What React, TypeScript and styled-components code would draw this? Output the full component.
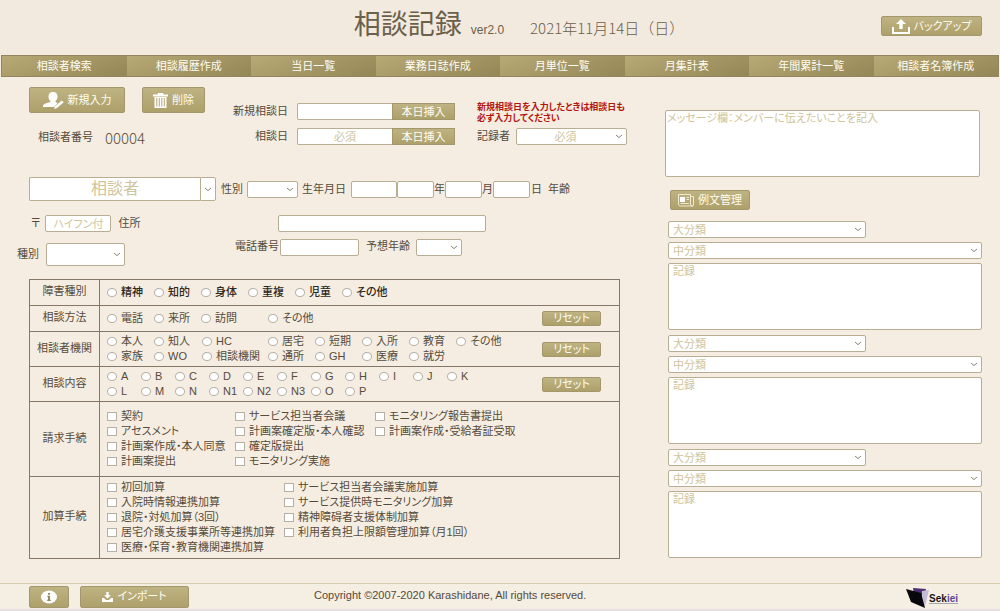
import React, { useId } from "react";
import styled, { createGlobalStyle, css } from "styled-components";

const line = "#b9ae94";
const rule = "#857868";
const ink = "#554b3c";
const hint = "#cfc49c";

const Global = createGlobalStyle`
  * { box-sizing: border-box; }
  html { background: #e4e2e2; }
  body {
    margin: 0;
    color: ${ink};
    font: 11px/15px "Liberation Sans", "Noto Sans CJK JP", sans-serif;
    font-feature-settings: "palt";
  }
  button, input, select, textarea { font: inherit; font-feature-settings: inherit; color: inherit; margin: 0; }
  button { cursor: pointer; }
  h1, p { margin: 0; }
`;

const Page = styled.div`
  background: #f5ede1;
  margin-bottom: 3px;
`;

const Header = styled.header`
  display: grid;
  grid-template-columns: 1fr auto 1fr;
  align-items: center;
  height: 55px;
  padding: 0 18px 3px 56px;
  background: #f2eadf;
`;

const Heading = styled.div`
  grid-column: 2;
  display: flex;
  align-items: baseline;
  padding-bottom: 2px;
  color: #6b6049;
`;

const Title = styled.h1`
  font-size: 27px;
  line-height: 40px;
  font-weight: 400;
`;

const Version = styled.span`
  margin: 0 26px 0 9px;
  font-size: 12px;
`;

const Today = styled.time`
  font-family: "Noto Sans CJK JP", sans-serif;
  font-size: 15px;
  font-weight: 300;
  font-feature-settings: normal;
`;

const gold = css`
  border: 1px solid #a3986c;
  background: linear-gradient(#bfb383, #ada06a);
  color: #fffdf2;
`;

const GoldButton = styled.button<{ $w: number; $h: number }>`
  ${gold}
  display: inline-flex;
  align-items: center;
  justify-content: center;
  gap: 4px;
  width: ${(p) => p.$w}px;
  height: ${(p) => p.$h}px;
  padding: 0;
  border-radius: 2px;
  white-space: nowrap;
`;

const BackupButton = styled(GoldButton)`
  justify-self: end;
`;

const Nav = styled.nav`
  display: grid;
  grid-template-columns: repeat(8, 1fr);
  margin: 0 1px;
  border: 1px solid #92865a;
`;

const NavLink = styled.a`
  background: linear-gradient(160deg, #b7aa76, #948656);
  color: #fffdf2;
  line-height: 20px;
  text-align: center;
  text-decoration: none;
`;

const Main = styled.main`
  display: grid;
  grid-template-columns: minmax(0, 620fr) minmax(0, 317fr);
  column-gap: 45px;
  padding: 10px 18px 24px 0;
`;

const Left = styled.div`
  min-width: 0;
`;

const Intro = styled.div`
  display: flex;
  align-items: flex-start;
  height: 90px;
  padding-left: 29px;
  > * { flex: none; }
`;

const Actions = styled.div`
  width: 199px;
`;

const ButtonRow = styled.div`
  display: flex;
  gap: 17px;
`;

const CaseNumber = styled.div`
  display: flex;
  align-items: center;
  gap: 12px;
  margin-top: 17px;
  padding-left: 9px;
`;

const CaseValue = styled.output`
  font-family: "Noto Sans CJK JP", sans-serif;
  font-size: 15px;
  font-weight: 300;
`;

const Dates = styled.div`
  display: grid;
  grid-template-columns: 60px 158px;
  column-gap: 9px;
  row-gap: 8px;
  margin-top: 16px;
`;

const DateLabel = styled.label`
  line-height: 17px;
  text-align: right;
`;

const DateField = styled.div`
  display: flex;
`;

const boxed = css`
  border: 1px solid ${line};
  border-radius: 2px;
  background: #fff;
  outline: none;
  &::placeholder { color: ${hint}; opacity: 1; }
`;

const TextBox = styled.input<{ $w: number; $center?: boolean }>`
  ${boxed}
  width: ${(p) => p.$w}px;
  height: 17px;
  padding: 0 3px;
  text-align: ${(p) => (p.$center ? "center" : "left")};
`;

const DateBox = styled(TextBox)`
  border-right: 0;
  border-radius: 2px 0 0 2px;
`;

const InsertButton = styled.button`
  ${gold}
  width: 63px;
  height: 17px;
  padding: 0;
  line-height: 14px;
`;

const Recorder = styled.div`
  margin: 15px 0 0 22px;
`;

const Notice = styled.p`
  height: 26px;
  color: #b3150f;
  font-size: 9px;
  font-weight: 700;
  line-height: 11px;
  white-space: nowrap;
`;

const Line = styled.div`
  display: flex;
  align-items: center;
`;

const FieldLabel = styled.label<{ $l?: number; $r?: number }>`
  margin: 0 ${(p) => p.$r ?? 0}px 0 ${(p) => p.$l ?? 0}px;
  white-space: nowrap;
`;

const PickBox = styled.div<{ $w?: number; $h: number }>`
  display: grid;
  width: ${(p) => (p.$w ? p.$w + "px" : "100%")};
  height: ${(p) => p.$h}px;
  > * { grid-area: 1 / 1; }
  > svg { place-self: center end; margin-right: 4px; pointer-events: none; }
`;

const NativeSelect = styled.select<{ $center?: boolean }>`
  ${boxed}
  appearance: none;
  width: 100%;
  height: 100%;
  padding: 0 16px 0 4px;
  color: ${hint};
  line-height: 14px;
  text-align-last: ${(p) => (p.$center ? "center" : "left")};
`;

const Chevron = () => (
  <svg width="8" height="5" viewBox="0 0 8 5" fill="none" stroke="#8d8470" aria-hidden="true">
    <path d="M1 1l3 2.6L7 1" />
  </svg>
);

type PickProps = { id?: string; label?: string; text?: string; w?: number; h?: number; center?: boolean };

const Pick = ({ id, label, text = "", w, h = 17, center }: PickProps) => (
  <PickBox $w={w} $h={h}>
    <NativeSelect id={id} aria-label={label} $center={center}>
      <option>{text}</option>
    </NativeSelect>
    <Chevron />
  </PickBox>
);

const PersonRow = styled(Line)`
  padding-left: 29px;
`;

const ClientBox = styled.input`
  ${boxed}
  width: 171px;
  height: 24px;
  border-right: 0;
  border-radius: 2px 0 0 2px;
  font-size: 16px;
  text-align: center;
`;

const ClientToggle = styled.button`
  ${boxed}
  display: grid;
  place-items: center;
  width: 16px;
  height: 24px;
  padding: 0;
  border-radius: 0 2px 2px 0;
`;

const AddressRow = styled(Line)`
  margin-top: 14px;
  padding-left: 31px;
`;

const AddressBox = styled(TextBox)`
  margin-left: 138px;
`;

const PhoneRow = styled(Line)`
  align-items: flex-start;
  height: 40px;
  margin-top: 7px;
  padding-left: 17px;
`;

const Kind = styled.div`
  display: flex;
  align-items: center;
  gap: 7px;
  width: 218px;
  margin-top: 4px;
`;

const Sheet = styled.form`
  margin: 0 0 0 29px;
  border: 1px solid ${rule};
`;

const SheetRow = styled.div<{ $h: number }>`
  display: grid;
  grid-template-columns: 70px minmax(0, 1fr) auto;
  align-items: center;
  min-height: ${(p) => p.$h}px;
  border-bottom: 1px solid ${rule};
  &:last-child { border-bottom: 0; }
`;

const SheetLabel = styled.div`
  display: grid;
  place-items: center;
  align-self: stretch;
  padding-bottom: 2px;
  border-right: 1px solid ${rule};
`;

const Choices = styled.div<{ $cols: string; $strong?: boolean }>`
  display: grid;
  grid-template-columns: ${(p) => p.$cols};
  grid-auto-rows: 15px;
  padding-left: 7px;
  color: ${(p) => (p.$strong ? "#2f281c" : ink)};
  font-weight: ${(p) => (p.$strong ? 500 : 400)};
`;

const Choice = styled.label`
  display: flex;
  align-items: center;
  gap: 4px;
  white-space: nowrap;
`;

const Radio = styled.input`
  appearance: none;
  flex: none;
  width: 10px;
  height: 9px;
  border: 1px solid #b5b0a6;
  border-radius: 50%;
  background: #fff;
  &:checked { background: ${ink}; }
`;

const Check = styled(Radio)`
  border-radius: 0;
`;

const Reset = styled(GoldButton)`
  margin-right: 18px;
`;

type GroupProps = {
  title: string;
  cols: string;
  items: string[];
  h: number;
  strong?: boolean;
  multi?: boolean;
  reset?: boolean;
};

const Group = ({ title, cols, items, h, strong, multi, reset }: GroupProps) => {
  const id = useId();
  return (
    <SheetRow $h={h} role="group" aria-labelledby={id}>
      <SheetLabel id={id}>{title}</SheetLabel>
      <Choices $cols={cols} $strong={strong}>
        {items.map((t, i) =>
          t ? (
            <Choice key={i}>
              {multi ? <Check type="checkbox" /> : <Radio type="radio" name={id} />}
              {t}
            </Choice>
          ) : (
            <span key={i} />
          )
        )}
      </Choices>
      {reset && <Reset type="reset" $w={59} $h={15}>リセット</Reset>}
    </SheetRow>
  );
};

const Right = styled.div`
  display: flex;
  flex-direction: column;
  align-items: flex-start;
  padding-top: 23px;
`;

const Area = styled.textarea`
  ${boxed}
  display: block;
  width: 100%;
  height: 67px;
  padding: 0 4px;
  resize: none;
`;

const MessageArea = styled(Area)`
  width: calc(100% - 2px);
  padding: 0 1px;
`;

const ExampleButton = styled(GoldButton)`
  margin: 13px 0 11px 5px;
`;

const Records = styled.div`
  display: grid;
  row-gap: 5px;
  width: 100%;
  padding-left: 3px;
`;

const Record = styled.section`
  display: grid;
  row-gap: 4px;
`;

const Major = styled.div`
  width: 63%;
`;

const Footer = styled.footer`
  display: grid;
  grid-template-columns: 285px auto 1fr;
  align-items: center;
  height: 26px;
  padding: 0 42px 0 29px;
  border-top: 1px solid #d6cbb0;
  background: #f5eee2;
`;

const FooterButtons = styled.div`
  display: flex;
  gap: 11px;
`;

const Copyright = styled.small`
  padding-bottom: 3px;
  font-size: 11px;
`;

const Brand = styled.a`
  display: flex;
  align-items: center;
  justify-self: end;
  padding-top: 3px;
  color: #1b1820;
  text-decoration: none;
`;

const BrandText = styled.span`
  padding-top: 2px;
  border-bottom: 1px solid #a9a5ad;
  font-size: 10px;
  font-weight: 700;
  line-height: 9px;
`;

const BrandAccent = styled.span`
  color: #5a4b96;
`;

const UploadIcon = () => (
  <svg width="18" height="15" viewBox="0 0 18 15" fill="#fff" aria-hidden="true">
    <path d="M9 0l5 5h-3.300v5H7.300V5H4zM0 8h2v5h14V8h2v7H0z" />
  </svg>
);

const ImportIcon = () => (
  <svg width="11" height="10" viewBox="0 0 11 10" fill="#fff" aria-hidden="true">
    <path d="M4.300 0h2.400v3.200H9L5.500 6.500 2 3.200h2.300zM0 6h2l2 2h3l2-2h2v4H0z" />
  </svg>
);

const PersonIcon = () => (
  <svg width="21" height="17" viewBox="0 0 21 17" aria-hidden="true">
    <path fill="#fff" d="M10 0c3 0 4.500 2 4.500 4.500 0 2-.8 3.500-2 4.500v1l2 1-3.500 4H0c0-3 1.500-3.500 7.500-5V9C6.200 8 5.500 6.500 5.500 4.500 5.500 2 7 0 10 0z" />
    <path fill="#fff" d="M18.700 8.500l2 1.700-6.700 5.800-3 1 1-2.800z" />
  </svg>
);

const TrashIcon = () => (
  <svg width="15" height="15" viewBox="0 0 15 15" fill="#fff" aria-hidden="true">
    <path d="M5 0h5l.7 1.500H15v2H0v-2h4.300z" />
    <path fillRule="evenodd" d="M1.500 4h12v11h-12zM3.300 5v8.500h1V5zm2.500 0v8.500h1V5zm2.500 0v8.500h1V5zm2.500 0v8.500h1V5z" />
  </svg>
);

const NewsIcon = () => (
  <svg width="16" height="13" viewBox="0 0 16 13" fill="none" stroke="#f1ead0" aria-hidden="true">
    <path d="M.5.5h12v9.500a2 2 0 0 0 2 2h-12a2 2 0 0 1-2-2zM12.500 2.500h3V11a1 1 0 0 1-2 0M8.500 3.500H11M8.500 5.500H11M2.500 9.500H11" />
    <path fill="#fff" stroke="none" d="M2 3h5v5H2z" />
  </svg>
);

const InfoIcon = () => (
  <svg width="16" height="14" viewBox="0 0 16 14" aria-hidden="true">
    <ellipse cx="8" cy="7" rx="8" ry="6.500" fill="#fff" />
    <path fill="#94885c" d="M7 3h2v1.700H7zM6.300 5.700H9v4h.8V11H6.200V9.700H7V7h-.7z" />
  </svg>
);

const FolderLogo = () => (
  <svg width="23" height="20" viewBox="0 0 23 20" aria-hidden="true">
    <path fill="#4b2f73" d="M7 0l13 1-3 12L8 6z" />
    <path fill="#c3bcd9" d="M16 3l7-1-4 16h-3z" />
    <path fill="#08070b" d="M0 1l15 4 4 15-14-6z" />
  </svg>
);

const menu = ["相談者検索", "相談履歴作成", "当日一覧", "業務日誌作成", "月単位一覧", "月集計表", "年間累計一覧", "相談者名簿作成"];

export default function App() {
  return (
    <>
      <Global />
      <Page>
        <Header>
          <Heading>
            <Title>相談記録</Title>
            <Version>ver2.0</Version>
            <Today dateTime="2021-11-14">2021年11月14日（日）</Today>
          </Heading>
          <BackupButton type="button" $w={101} $h={20}><UploadIcon />バックアップ</BackupButton>
        </Header>
        <Nav>
          {menu.map((m) => <NavLink href="#" key={m}>{m}</NavLink>)}
        </Nav>
        <Main>
          <Left>
            <Intro>
              <Actions>
                <ButtonRow>
                  <GoldButton type="button" $w={96} $h={26}><PersonIcon />新規入力</GoldButton>
                  <GoldButton type="button" $w={63} $h={26}><TrashIcon />削除</GoldButton>
                </ButtonRow>
                <CaseNumber>
                  <label htmlFor="case">相談者番号</label>
                  <CaseValue id="case">00004</CaseValue>
                </CaseNumber>
              </Actions>
              <Dates>
                <DateLabel htmlFor="first">新規相談日</DateLabel>
                <DateField>
                  <DateBox id="first" $w={95} />
                  <InsertButton type="button">本日挿入</InsertButton>
                </DateField>
                <DateLabel htmlFor="day">相談日</DateLabel>
                <DateField>
                  <DateBox id="day" $w={95} $center placeholder="必須" />
                  <InsertButton type="button">本日挿入</InsertButton>
                </DateField>
              </Dates>
              <Recorder>
                <Notice>新規相談日を入力したときは相談日も<br />必ず入力してください</Notice>
                <Line>
                  <FieldLabel htmlFor="recorder" $r={6}>記録者</FieldLabel>
                  <Pick id="recorder" text="必須" w={111} center />
                </Line>
              </Recorder>
            </Intro>
            <PersonRow>
              <ClientBox aria-label="相談者" placeholder="相談者" />
              <ClientToggle type="button" aria-label="相談者を選択"><Chevron /></ClientToggle>
              <FieldLabel htmlFor="sex" $l={5} $r={4}>性別</FieldLabel>
              <Pick id="sex" w={51} />
              <FieldLabel htmlFor="era" $l={4} $r={5}>生年月日</FieldLabel>
              <TextBox id="era" $w={46} />
              <TextBox id="year" $w={37} />
              <FieldLabel htmlFor="year">年</FieldLabel>
              <TextBox id="month" $w={37} />
              <FieldLabel htmlFor="month">月</FieldLabel>
              <TextBox id="date" $w={37} />
              <FieldLabel htmlFor="date" $l={1} $r={6}>日</FieldLabel>
              <span>年齢</span>
            </PersonRow>
            <AddressRow>
              <FieldLabel htmlFor="zip" $r={5}>〒</FieldLabel>
              <TextBox id="zip" $w={66} $center placeholder="ハイフン付" />
              <FieldLabel htmlFor="address" $l={7}>住所</FieldLabel>
              <AddressBox id="address" $w={208} />
            </AddressRow>
            <PhoneRow>
              <Kind>
                <label htmlFor="kind">種別</label>
                <Pick id="kind" w={79} h={23} />
              </Kind>
              <FieldLabel htmlFor="phone" $r={1}>電話番号</FieldLabel>
              <TextBox id="phone" $w={79} />
              <FieldLabel htmlFor="age" $l={7} $r={6}>予想年齢</FieldLabel>
              <Pick id="age" w={46} />
            </PhoneRow>
            <Sheet>
              <Group title="障害種別" h={26} strong cols="repeat(6, 47px)" items={["精神", "知的", "身体", "重複", "児童", "その他"]} />
              <Group title="相談方法" h={26} reset cols="47px 47px 67px 60px" items={["電話", "来所", "訪問", "その他"]} />
              <Group
                title="相談者機関" h={35} reset
                cols="47px 48px 66px repeat(5, 47px)"
                items={["本人", "知人", "HC", "居宅", "短期", "入所", "教育", "その他", "家族", "WO", "相談機関", "通所", "GH", "医療", "就労"]}
              />
              <Group
                title="相談内容" h={35} reset
                cols="repeat(11, 34px)"
                items={["A", "B", "C", "D", "E", "F", "G", "H", "I", "J", "K", "L", "M", "N", "N1", "N2", "N3", "O", "P"]}
              />
              <Group
                title="請求手続" h={75} multi
                cols="128px 140px 150px"
                items={["契約", "サービス担当者会議", "モニタリング報告書提出", "アセスメント", "計画案確定版・本人確認", "計画案作成・受給者証受取", "計画案作成・本人同意", "確定版提出", "", "計画案提出", "モニタリング実施"]}
              />
              <Group
                title="加算手続" h={81} multi
                cols="177px 200px"
                items={["初回加算", "サービス担当者会議実施加算", "入院時情報連携加算", "サービス提供時モニタリング加算", "退院・対処加算（3回）", "精神障碍者支援体制加算", "居宅介護支援事業所等連携加算", "利用者負担上限額管理加算（月1回）", "医療・保育・教育機関連携加算"]}
              />
            </Sheet>
          </Left>
          <Right>
            <MessageArea aria-label="メッセージ欄" placeholder="メッセージ欄：メンバーに伝えたいことを記入" />
            <ExampleButton type="button" $w={80} $h={20}><NewsIcon />例文管理</ExampleButton>
            <Records>
              {[1, 2, 3].map((n) => (
                <Record key={n}>
                  <Major><Pick label={`大分類${n}`} text="大分類" /></Major>
                  <Pick label={`中分類${n}`} text="中分類" />
                  <Area aria-label={`記録${n}`} placeholder="記録" />
                </Record>
              ))}
            </Records>
          </Right>
        </Main>
        <Footer>
          <FooterButtons>
            <GoldButton type="button" aria-label="情報" $w={40} $h={22}><InfoIcon /></GoldButton>
            <GoldButton type="button" $w={109} $h={22}><ImportIcon />インポート</GoldButton>
          </FooterButtons>
          <Copyright>Copyright ©2007-2020 Karashidane, All rights reserved.</Copyright>
          <Brand href="#"><FolderLogo /><BrandText>Sek<BrandAccent>iei</BrandAccent></BrandText></Brand>
        </Footer>
      </Page>
    </>
  );
}
